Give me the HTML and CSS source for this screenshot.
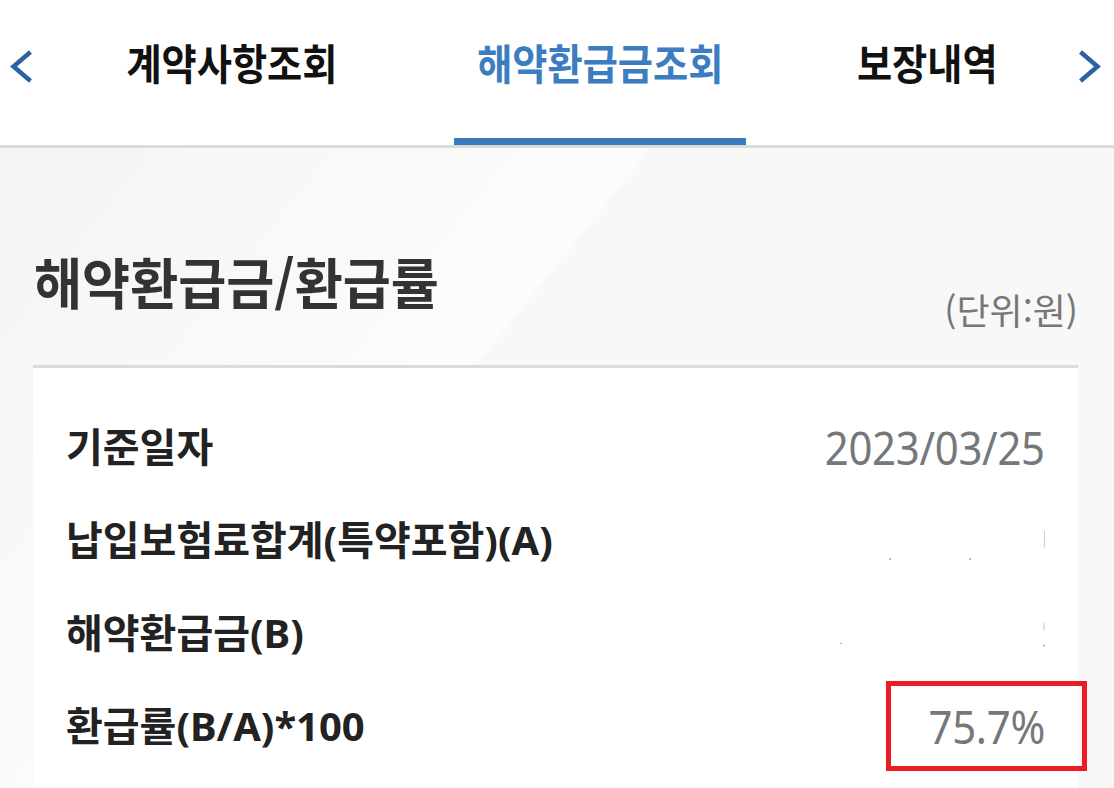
FILE: index.html
```html
<!DOCTYPE html>
<html lang="ko">
<head>
  <meta charset="UTF-8">
  <title>해약환급금조회</title>
  <link rel="stylesheet" href="styles.css">
  <meta name="viewport" content="width=device-width, initial-scale=1.0">
</head>
<body>

<header class="tab-bar">
  <button class="tab-arrow tab-arrow--prev" aria-label="이전">
    <svg viewBox="0 0 23 33" width="23" height="33"><polyline points="20.5,2 3.5,16.5 20.5,31" /></svg>
  </button>

  <ul class="tab-list">
    <li class="tab tab--contract"><span>계약사항조회</span></li>
    <li class="tab tab--refund is-active"><span>해약환급금조회</span></li>
    <li class="tab tab--coverage"><span>보장내역</span></li>
  </ul>

  <button class="tab-arrow tab-arrow--next" aria-label="다음">
    <svg viewBox="0 0 23 33" width="23" height="33"><polyline points="2.5,2 19.5,16.5 2.5,31" /></svg>
  </button>
</header>

<main class="content">
  <div class="section-head">
    <h2>해약환급금/환급률</h2>
    <span class="unit">(단위:원)</span>
  </div>

  <div class="card">
    <div class="row">
      <span class="label">기준일자</span>
      <span class="value">2023/03/25</span>
    </div>
    <div class="row">
      <span class="label">납입보험료합계(특약포함)(A)</span>
      <!-- amount hidden -->
      <svg class="ghost" viewBox="0 0 210 44" width="210" height="44">
        <line class="ghost-line" x1="209.5" y1="12.5" x2="209.5" y2="29.5" />
        <circle cx="55" cy="41" r="0.9" />
        <circle cx="135" cy="41" r="0.9" />
      </svg>
    </div>
    <div class="row">
      <span class="label">해약환급금(B)</span>
      <svg class="ghost" viewBox="0 0 210 44" width="210" height="44">
        <line class="ghost-line" x1="209" y1="11.5" x2="209" y2="19.5" />
        <circle cx="6" cy="32.5" r="0.8" />
        <circle cx="209" cy="34.5" r="0.9" />
      </svg>
    </div>
    <div class="row">
      <span class="label">환급률(B/A)*100</span>
      <span class="value">75.7%</span>
      <span class="mark"></span>
    </div>
  </div>
</main>

</body>
</html>
```

FILE: styles.css
```css
:root {
  --blue: #3a7bbd;
  --arrow: #2b63a2;
  --line: #dcdcd7;
  --text: #222;
  --muted: #75787b;
}

body {
  margin: 0;
  background-color: #f8f8f8;
  font-family: "Noto Sans", "Noto Sans CJK KR", sans-serif;
  color: var(--text);
}

/* top tab strip */
.tab-bar {
  position: relative;
  height: 148px;
  box-sizing: border-box;
  background-color: #fff;
  border-bottom: 3px solid var(--line);
}

.tab-list {
  display: flex;
  gap: 94px;
  margin: 0;
  padding: 0 0 0 104px;
  list-style: none;
  height: 145px;
}

.tab {
  flex: none;
  display: flex;
  justify-content: center;
  height: 145px;
  box-sizing: border-box;
  padding-top: 41px;
  font-family: "Noto Sans CJK KR", sans-serif;
  font-weight: 700;
  font-size: 42px;
  line-height: 42px;
  color: #111;
  white-space: nowrap;
}

.tab span {
  display: inline-block;
  transform: scaleX(0.91);   /* app font is narrower */
}

.tab--contract { width: 256px; }
.tab--refund   { width: 292px; }
.tab--coverage { width: 175px; }

.tab.is-active {
  color: #3b7dc0;
  border-bottom: 7px solid var(--blue);
}

.tab-arrow {
  position: absolute;
  top: 50px;
  width: 23px;
  height: 33px;
  padding: 0;
  border: none;
  background: none;
  cursor: pointer;
}

.tab-arrow svg {
  display: block;
  fill: none;
  stroke: var(--arrow);
  stroke-width: 4.5;
}

.tab-arrow--prev { left: 10px; }
.tab-arrow--next { right: 13px; }

/* content */
.content {
  min-height: calc(100vh - 148px);
  padding-top: 105px;
  box-sizing: border-box;
  background: linear-gradient(128.8deg, #f4f4f4 0%, #fcfcfc 39.9%, #f8f8f8 40%, #f8f8f8 100%);
}

.section-head {
  display: flex;
  justify-content: space-between;
  align-items: flex-start;
  height: 112px;
  padding: 0 36px 0 34px;
}

.section-head h2 {
  margin: 0;
  font-family: "Noto Sans CJK KR", sans-serif;
  font-size: 55px;
  line-height: 55px;
  font-weight: 700;
  color: #333;
  white-space: nowrap;
  transform: scaleX(0.95);
  transform-origin: left center;
}

.unit {
  margin-top: 38px;
  font-family: "Noto Sans CJK KR", sans-serif;
  font-size: 36px;
  line-height: 36px;
  color: #777;
}

.card {
  margin: 0 36px 0 33px;
  padding: 32px 33px 16px;
  background-color: #fff;
  border-top: 3px solid var(--line);
}

.row {
  position: relative;
  display: flex;
  justify-content: space-between;
  align-items: center;
  height: 93px;
}

.label {
  font-size: 40px;
  line-height: 40px;
  font-weight: 700;
  color: var(--text);
  white-space: nowrap;
}

.value {
  font-size: 46px;
  line-height: 46px;
  color: var(--muted);
  letter-spacing: -0.3px;
  transform: scaleX(0.91);
  transform-origin: right center;
}

.ghost {
  display: block;
}

.ghost circle {
  fill: #9a9a9a;
}

.ghost-line {
  stroke: #cfcfcf;
  stroke-width: 1.2;
}

/* red highlight box */
.mark {
  position: absolute;
  top: 2px;
  right: -42px;
  width: 201px;
  height: 90px;
  box-sizing: border-box;
  border: 5px solid #ec1c24;
}
```
